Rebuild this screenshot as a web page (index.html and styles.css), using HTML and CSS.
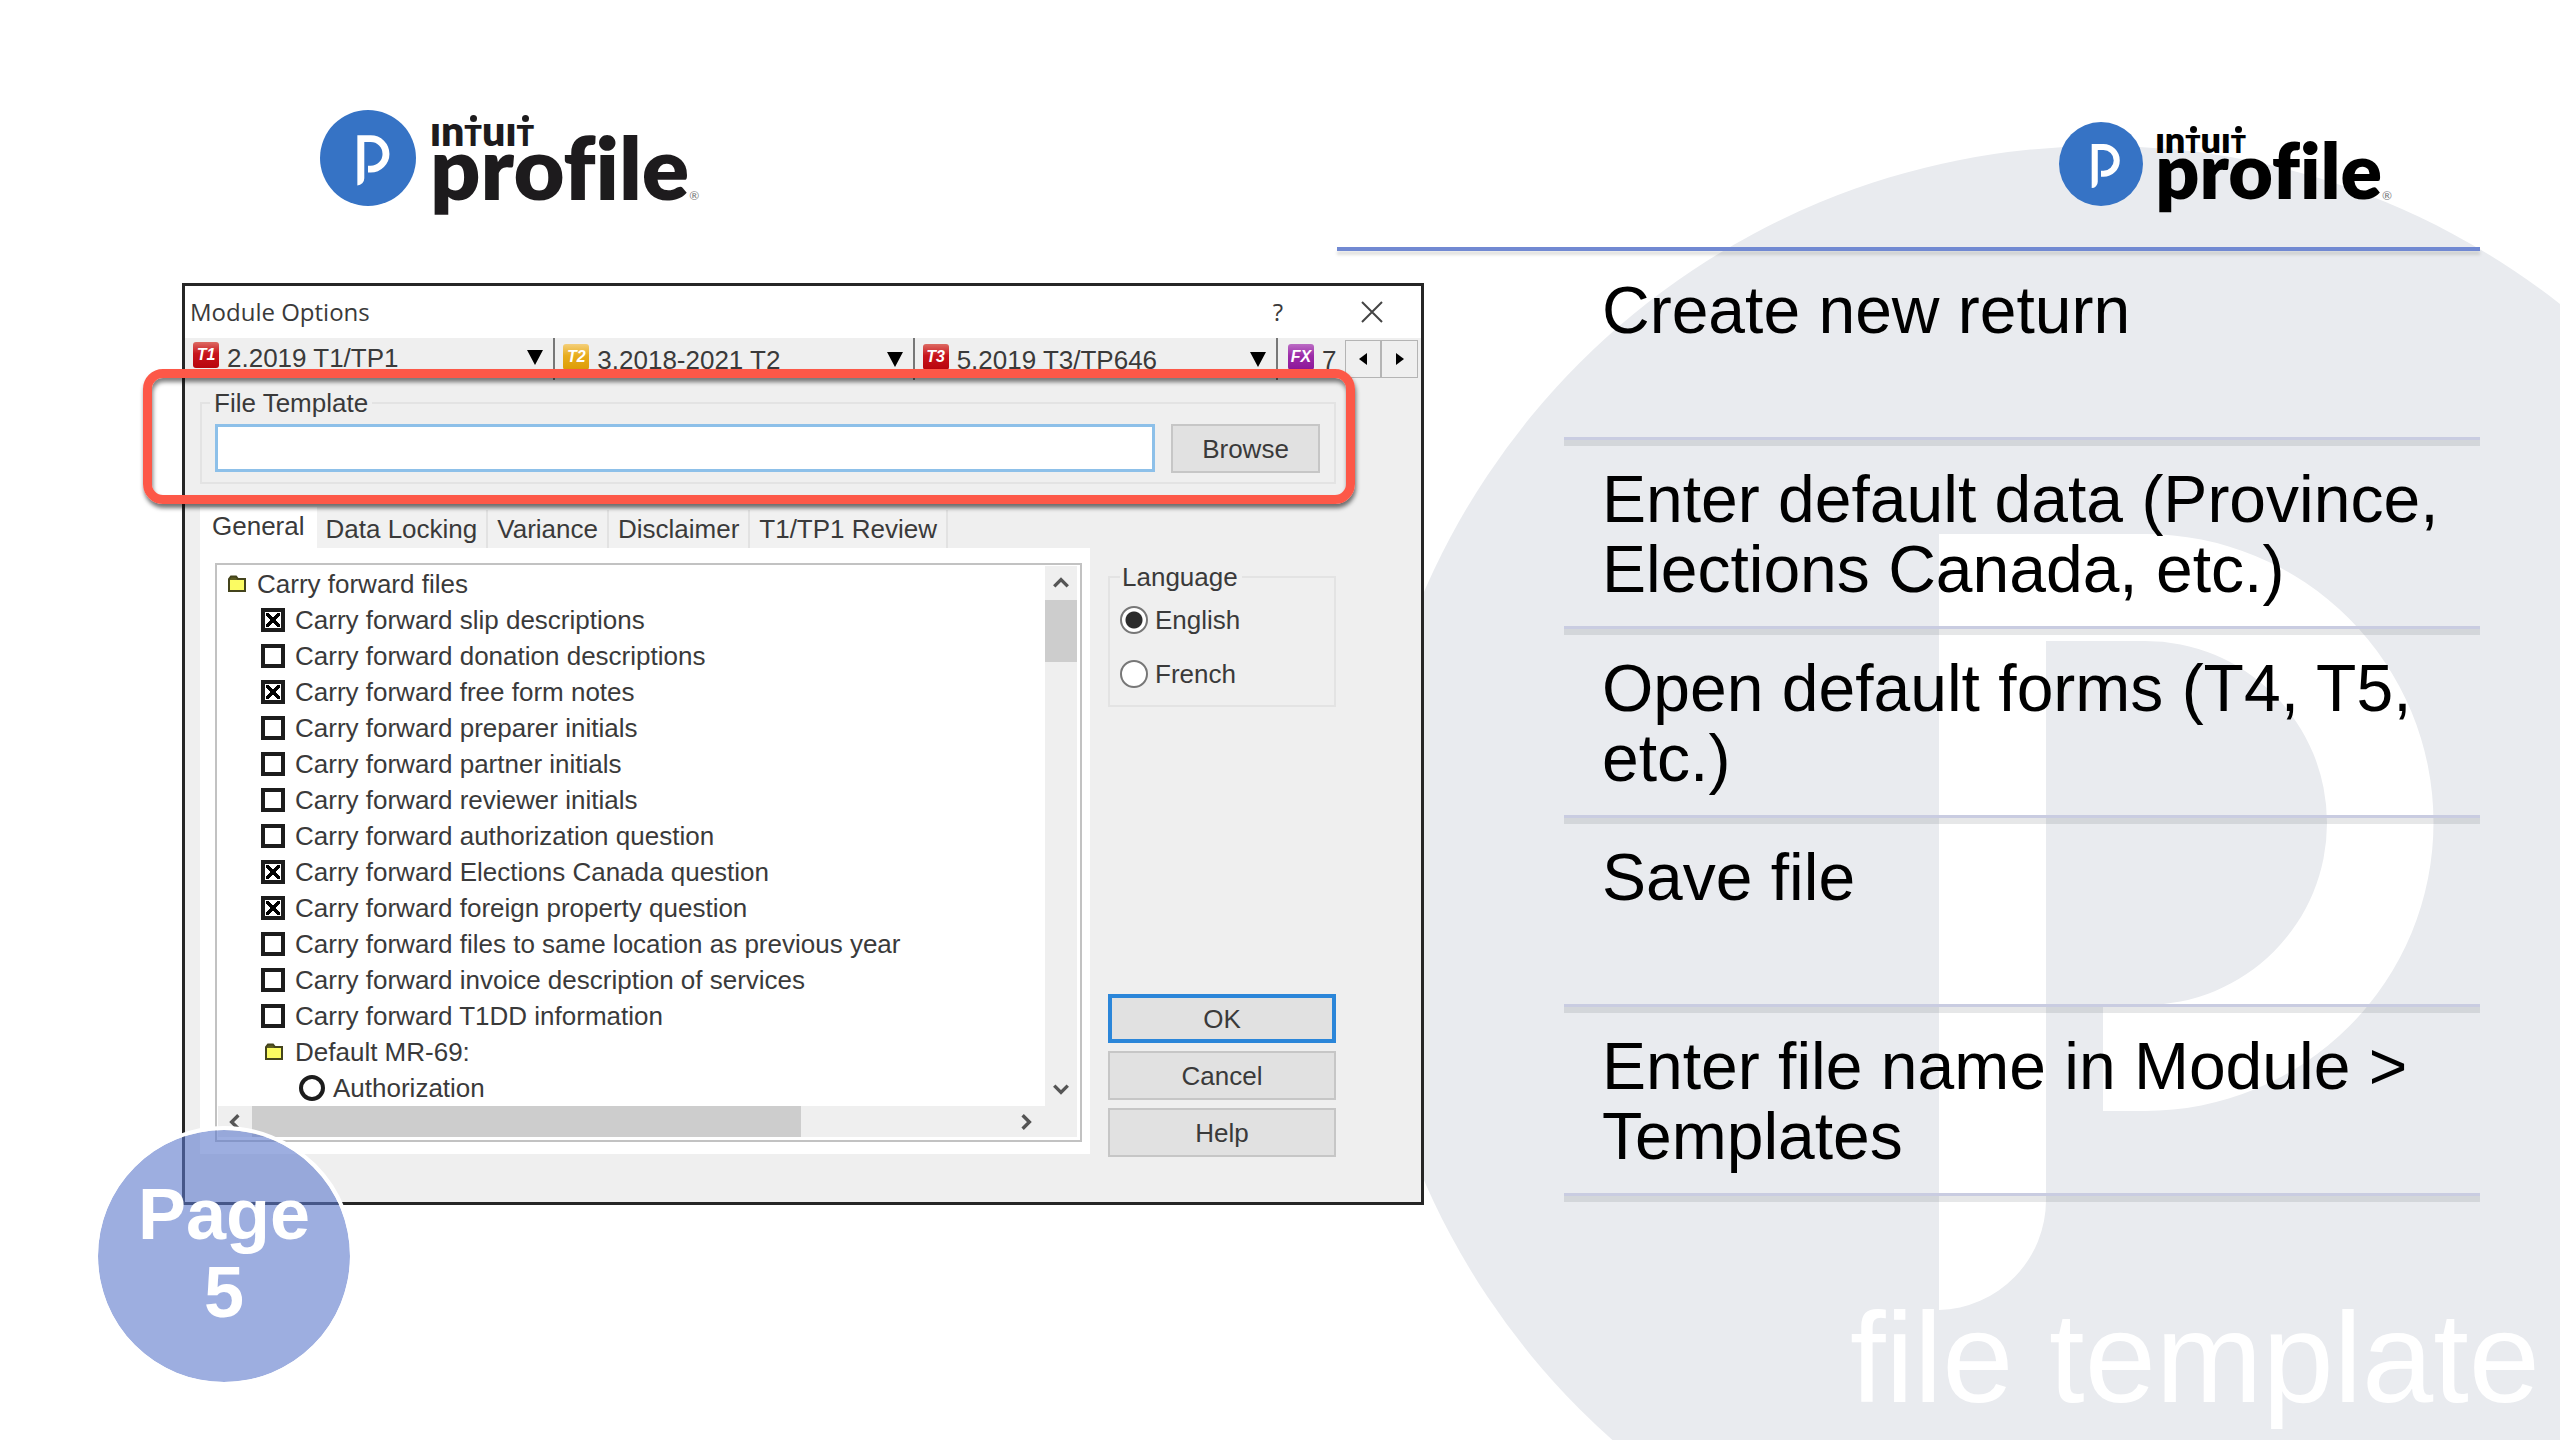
FILE: index.html
```html
<!DOCTYPE html>
<html lang="en">
<head>
<meta charset="utf-8">
<title>Intuit ProFile – file template</title>
<link rel="stylesheet" href="styles.css">
</head>
<body>
<svg class="defs" aria-hidden="true">
  <symbol id="p-mark" viewBox="0 0 1480 1480">
    <circle class="disc" cx="740" cy="740" r="740"/>
    <path class="letter" d="M576 388H782A288 288 0 0 1 782 965H740V859H782A182 182 0 0 0 782 495H683V1054A110 110 0 0 1 576 1164Z"/>
  </symbol>
  <symbol id="folder" viewBox="0 0 20 18">
    <path d="M2 16V4L4 1.500H9L11 4H18V16Z" fill="#5c5c20" stroke="#44441c" stroke-width="2"/>
    <path d="M3 5H17V15H3Z" fill="#fbfb62"/>
  </symbol>
  <symbol id="chevron" viewBox="0 0 16 16">
    <path d="M2 11L8 5L14 11" fill="none" stroke="#555" stroke-width="3"/>
  </symbol>
</svg>

<div class="slide">
  <svg class="watermark" aria-hidden="true"><use href="#p-mark"/></svg>

  <header class="brands">
    <div class="logo">
      <svg class="logo-mark" aria-hidden="true"><use href="#p-mark"/></svg>
      <div class="wordmark">
        <span class="maker">ın<span class="dotted">T</span>uı<span class="dotted">T</span></span>
        <span class="product">profile</span>
      </div>
      <small class="reg">®</small>
    </div>
    <div class="logo logo-small">
      <svg class="logo-mark" aria-hidden="true"><use href="#p-mark"/></svg>
      <div class="wordmark">
        <span class="maker">ın<span class="dotted">T</span>uı<span class="dotted">T</span></span>
        <span class="product">profile</span>
      </div>
      <small class="reg">®</small>
    </div>
  </header>
  <hr class="rule">

  <main class="content">
    <section class="dialog" aria-label="Module Options">
      <div class="titlebar">
        <span class="title">Module Options</span>
        <button class="caption">?</button>
        <button class="caption" aria-label="Close"><svg viewBox="0 0 22 22" width="22" height="22"><path d="M1 1L21 21M21 1L1 21" stroke="#444" stroke-width="2"/></svg></button>
      </div>

      <div class="modules">
        <button class="module current"><i class="badge red">T1</i><span>2.2019 T1/TP1</span><b class="drop"></b></button>
        <button class="module"><i class="badge amber">T2</i><span>3.2018-2021 T2</span><b class="drop"></b></button>
        <button class="module"><i class="badge red">T3</i><span>5.2019 T3/TP646</span><b class="drop"></b></button>
        <button class="module last"><i class="badge purple">FX</i><span>7</span></button>
        <button class="step" aria-label="Previous"><b class="left"></b></button>
        <button class="step" aria-label="Next"><b class="right"></b></button>
      </div>

      <div class="pane">
        <fieldset class="template">
          <legend><label for="file">File Template</label></legend>
          <div class="template-row">
            <input type="text" id="file" class="file">
            <button class="btn browse">Browse</button>
          </div>
        </fieldset>

        <div class="columns">
          <div class="options">
            <div class="tabs">
              <button class="tab active">General</button>
              <button class="tab">Data Locking</button>
              <button class="tab">Variance</button>
              <button class="tab">Disclaimer</button>
              <button class="tab">T1/TP1 Review</button>
            </div>
            <div class="tab-body">
              <div class="listbox">
                <div class="tree">
                  <div class="row"><svg class="folder"><use href="#folder"/></svg>Carry forward files</div>
                  <label class="row inner"><input type="checkbox" checked>Carry forward slip descriptions</label>
                  <label class="row inner"><input type="checkbox">Carry forward donation descriptions</label>
                  <label class="row inner"><input type="checkbox" checked>Carry forward free form notes</label>
                  <label class="row inner"><input type="checkbox">Carry forward preparer initials</label>
                  <label class="row inner"><input type="checkbox">Carry forward partner initials</label>
                  <label class="row inner"><input type="checkbox">Carry forward reviewer initials</label>
                  <label class="row inner"><input type="checkbox">Carry forward authorization question</label>
                  <label class="row inner"><input type="checkbox" checked>Carry forward Elections Canada question</label>
                  <label class="row inner"><input type="checkbox" checked>Carry forward foreign property question</label>
                  <label class="row inner"><input type="checkbox">Carry forward files to same location as previous year</label>
                  <label class="row inner"><input type="checkbox">Carry forward invoice description of services</label>
                  <label class="row inner"><input type="checkbox">Carry forward T1DD information</label>
                  <div class="row inner"><svg class="folder"><use href="#folder"/></svg>Default MR-69:</div>
                  <label class="row deep"><input type="radio" name="mr69">Authorization</label>
                </div>
                <div class="vscroll">
                  <svg class="arrow"><use href="#chevron"/></svg>
                  <div class="thumb"></div>
                  <svg class="arrow flip"><use href="#chevron"/></svg>
                </div>
                <div class="hscroll">
                  <svg class="arrow west"><use href="#chevron"/></svg>
                  <div class="thumb"></div>
                  <svg class="arrow east"><use href="#chevron"/></svg>
                </div>
              </div>
            </div>
          </div>

          <div class="side">
            <fieldset class="language">
              <legend>Language</legend>
              <label><input type="radio" name="lang" checked>English</label>
              <label><input type="radio" name="lang">French</label>
            </fieldset>
            <div class="actions">
              <button class="btn primary">OK</button>
              <button class="btn">Cancel</button>
              <button class="btn">Help</button>
            </div>
          </div>
        </div>
      </div>
      <div class="highlight"></div>
    </section>

    <ul class="steps">
      <li>Create new return</li>
      <li>Enter default data (Province, Elections Canada, etc.)</li>
      <li>Open default forms (T4, T5, etc.)</li>
      <li>Save file</li>
      <li>Enter file name in Module &gt; Templates</li>
    </ul>
  </main>

  <footer class="caption-text">file template</footer>
  <div class="page-badge">Page<br>5</div>
</div>
</body>
</html>
```

FILE: styles.css
```css
* { box-sizing: border-box; }

body {
  margin: 0;
  background: #fff;
  color: #000;
  font-family: "Liberation Sans", Arial, sans-serif;
}

button {
  font: inherit;
  color: inherit;
  margin: 0;
  padding: 0;
  border: 0;
  background: none;
}

.defs { position: absolute; width: 0; height: 0; }

.slide {
  position: relative;
  display: flex;
  flex-direction: column;
  min-height: 100vh;
  overflow: hidden;
}

/* Oversized brand mark behind the right half */
.watermark {
  position: absolute;
  top: 146px;
  right: -283px;
  width: 1480px;
  height: 1480px;
  --disc: #e9ebef;
}

.disc { fill: var(--disc, #3673c5); }
.letter { fill: #fff; }

/* Logos */
.brands {
  position: relative;
  display: flex;
  justify-content: space-between;
  align-items: flex-end;
  padding: 110px 168px 41px 320px;
}

.logo {
  display: flex;
  align-items: flex-start;
  color: #1d1b1d;
  font-family: Lato, sans-serif;
  font-variant-ligatures: none;
}
.logo-mark { width: 96px; height: 96px; margin-right: 14px; }
.wordmark { display: flex; flex-direction: column; font-weight: 800; }
.maker { font-size: 41px; line-height: 42px; }
.product { font-size: 88px; line-height: 28px; }
.reg { padding-top: 78px; font-size: 12px; line-height: 16px; color: #777; }

.dotted { position: relative; font-size: 29px; line-height: 30px; }
.dotted::before {
  content: "";
  position: absolute;
  left: calc(50% - 3px);
  top: -2px;
  width: 7px;
  height: 7px;
  border-radius: 50%;
  background: currentColor;
}

.logo-small { color: #000; }
.logo-small .logo-mark { width: 84px; height: 84px; margin-right: 12px; }
.logo-small .maker { font-size: 36px; line-height: 35px; }
.logo-small .dotted { font-size: 25px; line-height: 26px; }
.logo-small .product { font-size: 77px; line-height: 24px; }
.logo-small .reg { padding-top: 66px; }

.rule {
  position: relative;
  width: 44.65%;
  height: 4px;
  margin: 0 80px 0 auto;
  border: 0;
  background: #7189d2;
  box-shadow: 0 4px 3px rgba(90, 90, 80, .18);
}

.content {
  position: relative;
  display: grid;
  grid-template-columns: minmax(0, 1242fr) minmax(0, 916fr);
  column-gap: 140px;
  align-items: start;
  padding: 0 80px 0 182px;
}

/* Dialog */
.dialog {
  position: relative;
  margin-top: 32px;
  border: 3px solid #262626;
  background: #efefef;
  color: #3a3a3a;
  font-size: 26px;
  line-height: 28px;
}

.titlebar {
  display: flex;
  align-items: center;
  height: 52px;
  padding: 0 27px 0 5px;
  background: #fff;
}
.title { flex: 1; font-family: "Open Sans", sans-serif; font-size: 24px; }
.caption {
  display: flex;
  align-items: center;
  justify-content: center;
  width: 44px;
  height: 44px;
  margin-left: 50px;
  font-family: "Open Sans", sans-serif;
  font-size: 24px;
}

.modules {
  display: grid;
  grid-template-columns: 370fr 359fr 363fr 67fr 36px 37px;
  height: 42px;
  padding-right: 3px;
}
.module {
  display: flex;
  align-items: flex-start;
  gap: 8px;
  min-width: 0;
  padding: 6px 10px 0 8px;
  border-right: 2px solid #777;
  text-align: left;
  white-space: nowrap;
  overflow: hidden;
}
.module.current { padding-top: 4px; }
.module span { flex: 1; line-height: 32px; }
.module.last { padding-left: 10px; border: 0; }
.badge {
  flex: none;
  width: 26px;
  height: 26px;
  border-radius: 3px;
  color: #fff;
  font-size: 16px;
  font-weight: bold;
  line-height: 26px;
  text-align: center;
}
.red { background: linear-gradient(#dd6a62, #c8141c 45%, #b8060e); }
.amber { background: linear-gradient(#f4cf7a, #e8ac1c 45%, #dc9c08); }
.purple { background: linear-gradient(#bb6cc4, #9c2ca8 45%, #8c1698); }
.drop {
  margin-top: 8px;
  border: 8px solid transparent;
  border-top: 15px solid #000;
  border-bottom: 0;
}
.step {
  display: flex;
  align-items: center;
  justify-content: center;
  height: 38px;
  margin-top: 2px;
  border: 1px solid #b4b4b4;
}
.left, .right { border: 6px solid transparent; }
.left { border-right: 8px solid #000; border-left: 0; }
.right { border-left: 8px solid #000; border-right: 0; }

.pane { padding: 9px 85px 45px 15px; }

fieldset { min-width: 0; margin: 0; border: 2px solid #e3e3e3; }
legend { padding: 0 4px; }

.template { padding: 7px 14px 9px 8px; }
.template-row { display: flex; gap: 16px; padding-left: 5px; }
.file {
  flex: 1;
  min-width: 0;
  height: 48px;
  border: 3px solid #8dc0e9;
  background: #fff;
  font: inherit;
  outline: 0;
}

.btn {
  height: 49px;
  border: 2px solid #c6c6c6;
  background: #e1e1e1;
}
.browse { width: 149px; }
.primary { border: 4px solid #2b86d9; }

.columns {
  display: grid;
  grid-template-columns: minmax(0, 1fr) 228px;
  column-gap: 18px;
  margin-top: 23px;
}
.options { margin-bottom: 3px; }

.tabs { display: flex; align-items: flex-end; height: 41px; }
.tab {
  height: 38px;
  padding: 0 9px;
  border-right: 2px solid #e2e2e2;
  background: #f1f1f1;
}
.tab.active { height: 41px; padding: 0 12px 4px; border: 0; background: #fff; }
.tab-body { padding: 15px 8px 12px 15px; background: #fff; }

.listbox {
  display: grid;
  grid-template-columns: minmax(0, 1fr) 32px;
  padding: 1px 3px 3px 1px;
  border: 2px solid #c2c2c2;
  background: #fff;
}
.row {
  display: flex;
  align-items: center;
  gap: 10px;
  height: 36px;
  padding-left: 9px;
  white-space: nowrap;
}
.inner { padding-left: 43px; }
.deep { padding-left: 81px; }
.folder { width: 20px; height: 18px; }
.inner .folder { margin: 0 1px 0 3px; }

.row input {
  appearance: none;
  width: 24px;
  height: 24px;
  margin: 0;
  border: 4px solid #1c1c1c;
  background: #fff;
}
.row input[type="radio"] { border-radius: 50%; width: 26px; height: 26px; margin-right: -2px; }
.row input:checked {
  background:
    linear-gradient(45deg, transparent 42%, #000 42% 58%, transparent 58%) center / 14px 14px no-repeat,
    linear-gradient(-45deg, transparent 42%, #000 42% 58%, transparent 58%) center / 14px 14px no-repeat,
    #fff;
}

.vscroll, .hscroll { display: flex; align-items: center; background: #efefef; }
.vscroll { flex-direction: column; }
.vscroll .thumb { width: 100%; height: 62px; background: #cdcdcd; }
.hscroll { grid-column: 1 / -1; height: 31px; padding-right: 34px; }
.hscroll .thumb { width: 66.5%; height: 100%; background: #cdcdcd; }
.arrow { flex: none; width: 18px; height: 18px; margin: 8px; }
.flip { margin-top: auto; transform: rotate(180deg); }
.west { transform: rotate(-90deg); }
.east { margin-left: auto; transform: rotate(90deg); }

.side { display: flex; flex-direction: column; padding-top: 56px; }
.language { padding: 8px 10px 2px; }
.language legend { padding: 0 4px 0 2px; }
.language label { display: flex; align-items: center; gap: 7px; height: 42px; }
.language label + label { margin: 12px 0 8px; }
.actions { display: grid; gap: 8px; margin-top: auto; }
.language input {
  appearance: none;
  width: 28px;
  height: 28px;
  margin: 0;
  border: 2px solid #777;
  border-radius: 50%;
  background: #fff;
}
.language input:checked { background: radial-gradient(circle, #2c2c2c 8px, #fff 9px); }

/* Callout drawn over the dialog */
.highlight {
  position: absolute;
  top: 83px;
  left: -42px;
  right: 66px;
  height: 135px;
  border: 9px solid #fd5848;
  border-radius: 20px;
  box-shadow: 1px 4px 4px rgba(0, 0, 0, .55), inset 1px 4px 4px rgba(0, 0, 0, .5);
  pointer-events: none;
}

/* Steps */
.steps { margin: 0; padding: 0; list-style: none; font-size: 66px; line-height: 70px; }
.steps li {
  min-height: 189px;
  padding: 24px 0 0 38px;
  border-bottom: 3px solid #c9cce1;
  box-shadow: 0 6px 0 rgba(100, 105, 115, .16);
}

.caption-text {
  position: relative;
  margin-top: auto;
  padding: 0 20px 10px;
  color: #fff;
  font-size: 128px;
  line-height: 144px;
  text-align: right;
}

.page-badge {
  position: absolute;
  left: 94px;
  bottom: 54px;
  width: 260px;
  height: 260px;
  padding-top: 45px;
  border: 4px solid #fff;
  border-radius: 50%;
  background: rgba(92, 120, 203, .6);
  background-clip: padding-box;
  color: #fff;
  font-size: 72px;
  font-weight: bold;
  line-height: 78px;
  text-align: center;
}
```
